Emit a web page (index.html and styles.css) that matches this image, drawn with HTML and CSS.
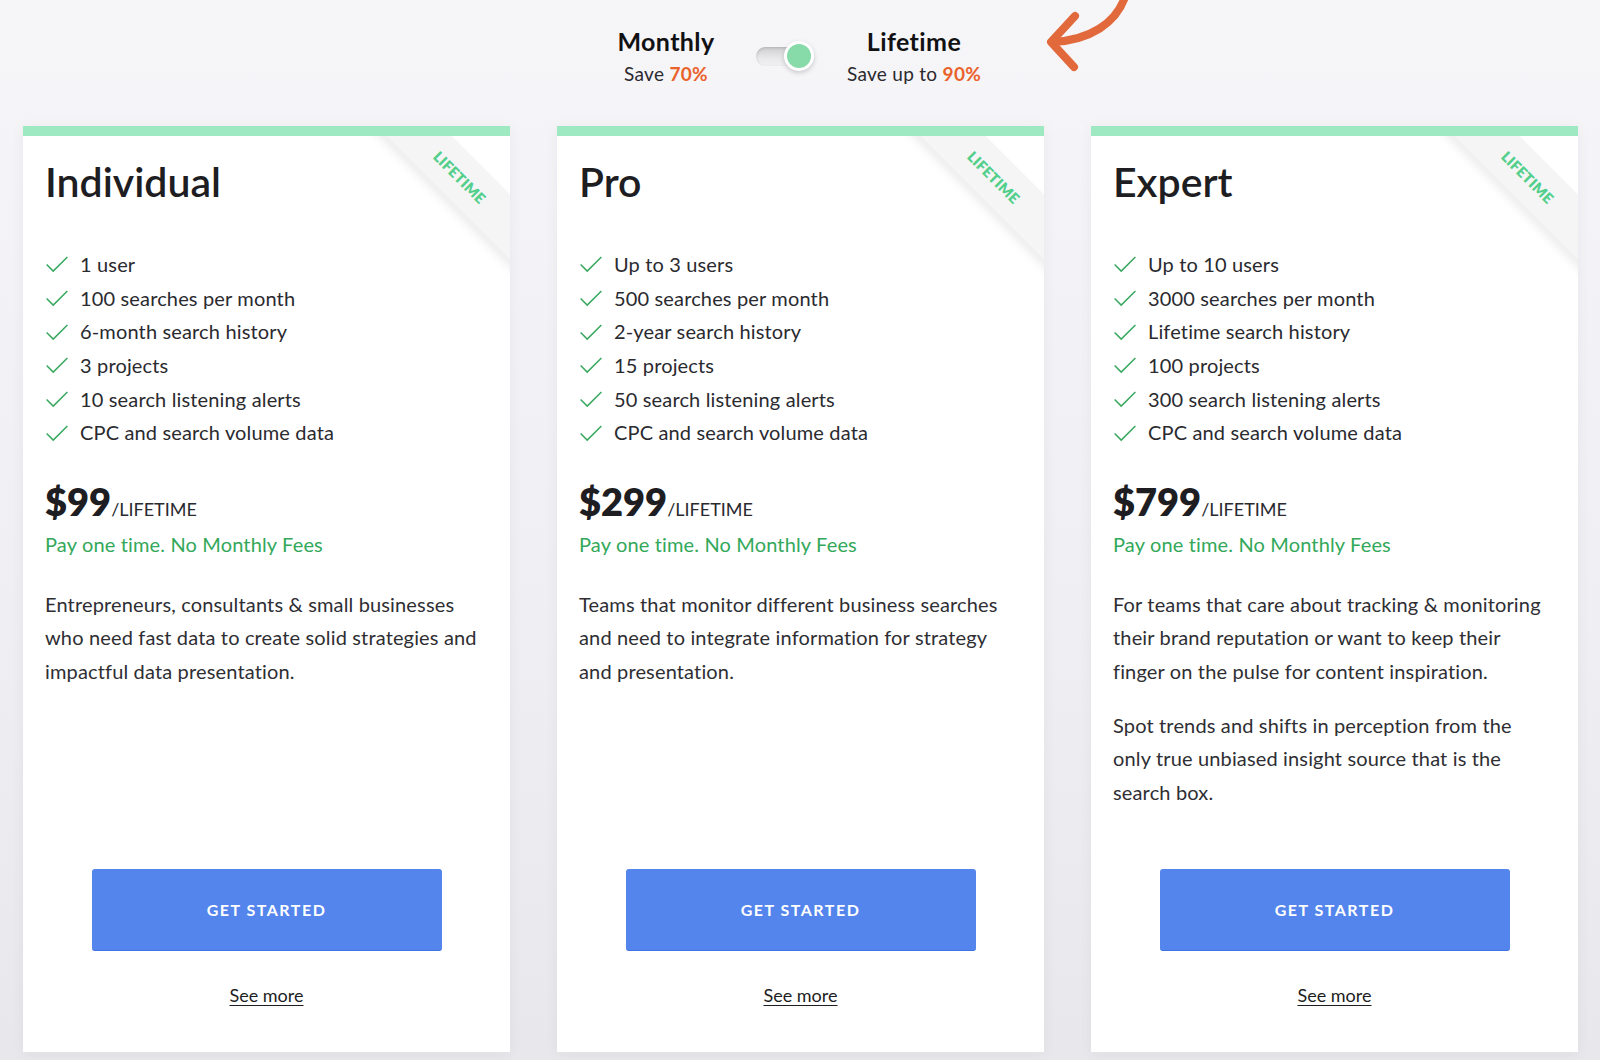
FILE: index.html
```html
<!DOCTYPE html>
<html lang="en">
<head>
<meta charset="utf-8">
<title>Pricing</title>
<link rel="stylesheet" href="styles.css">
</head>
<body>
<header class="switcher">
  <div class="switch-group">
    <div class="option option-monthly">
      <div class="option-title">Monthly</div>
      <div class="option-sub">Save <span class="hot">70%</span></div>
    </div>
    <div class="toggle"><span class="toggle-track"></span><span class="toggle-knob"></span></div>
    <div class="option option-lifetime">
      <div class="option-title">Lifetime</div>
      <div class="option-sub">Save up to <span class="hot">90%</span></div>
    </div>
  </div>
  <svg class="arrow" width="110" height="80" viewBox="0 0 110 80" aria-hidden="true">
    <path d="M93,-6 C84,24 56,40 20,42" fill="none" stroke="#e1693c" stroke-width="8" stroke-linecap="round"/>
    <path d="M42,16 L18,42 L41,67" fill="none" stroke="#e1693c" stroke-width="8" stroke-linecap="round" stroke-linejoin="round"/>
  </svg>
</header>

<main class="plans">
  <section class="card">
    <div class="ribbon"><span>LIFETIME</span></div>
    <h2 class="plan-name">Individual</h2>
    <ul class="features">
      <li><svg class="check" viewBox="0 0 24 18"><polyline points="1,9 8,16 23,1"/></svg>1 user</li>
      <li><svg class="check" viewBox="0 0 24 18"><polyline points="1,9 8,16 23,1"/></svg>100 searches per month</li>
      <li><svg class="check" viewBox="0 0 24 18"><polyline points="1,9 8,16 23,1"/></svg>6-month search history</li>
      <li><svg class="check" viewBox="0 0 24 18"><polyline points="1,9 8,16 23,1"/></svg>3 projects</li>
      <li><svg class="check" viewBox="0 0 24 18"><polyline points="1,9 8,16 23,1"/></svg>10 search listening alerts</li>
      <li><svg class="check" viewBox="0 0 24 18"><polyline points="1,9 8,16 23,1"/></svg>CPC and search volume data</li>
    </ul>
    <div class="price"><span class="amount">$99</span><span class="period">/LIFETIME</span></div>
    <div class="once">Pay one time. No Monthly Fees</div>
    <div class="desc">
      <p>Entrepreneurs, consultants &amp; small businesses who need fast data to create solid strategies and impactful data presentation.</p>
    </div>
    <div class="card-foot">
      <a class="btn" href="#">GET STARTED</a>
      <a class="more" href="#">See more</a>
    </div>
  </section>

  <section class="card">
    <div class="ribbon"><span>LIFETIME</span></div>
    <h2 class="plan-name">Pro</h2>
    <ul class="features">
      <li><svg class="check" viewBox="0 0 24 18"><polyline points="1,9 8,16 23,1"/></svg>Up to 3 users</li>
      <li><svg class="check" viewBox="0 0 24 18"><polyline points="1,9 8,16 23,1"/></svg>500 searches per month</li>
      <li><svg class="check" viewBox="0 0 24 18"><polyline points="1,9 8,16 23,1"/></svg>2-year search history</li>
      <li><svg class="check" viewBox="0 0 24 18"><polyline points="1,9 8,16 23,1"/></svg>15 projects</li>
      <li><svg class="check" viewBox="0 0 24 18"><polyline points="1,9 8,16 23,1"/></svg>50 search listening alerts</li>
      <li><svg class="check" viewBox="0 0 24 18"><polyline points="1,9 8,16 23,1"/></svg>CPC and search volume data</li>
    </ul>
    <div class="price"><span class="amount">$299</span><span class="period">/LIFETIME</span></div>
    <div class="once">Pay one time. No Monthly Fees</div>
    <div class="desc">
      <p>Teams that monitor different business searches and need to integrate information for strategy and presentation.</p>
    </div>
    <div class="card-foot">
      <a class="btn" href="#">GET STARTED</a>
      <a class="more" href="#">See more</a>
    </div>
  </section>

  <section class="card">
    <div class="ribbon"><span>LIFETIME</span></div>
    <h2 class="plan-name">Expert</h2>
    <ul class="features">
      <li><svg class="check" viewBox="0 0 24 18"><polyline points="1,9 8,16 23,1"/></svg>Up to 10 users</li>
      <li><svg class="check" viewBox="0 0 24 18"><polyline points="1,9 8,16 23,1"/></svg>3000 searches per month</li>
      <li><svg class="check" viewBox="0 0 24 18"><polyline points="1,9 8,16 23,1"/></svg>Lifetime search history</li>
      <li><svg class="check" viewBox="0 0 24 18"><polyline points="1,9 8,16 23,1"/></svg>100 projects</li>
      <li><svg class="check" viewBox="0 0 24 18"><polyline points="1,9 8,16 23,1"/></svg>300 search listening alerts</li>
      <li><svg class="check" viewBox="0 0 24 18"><polyline points="1,9 8,16 23,1"/></svg>CPC and search volume data</li>
    </ul>
    <div class="price"><span class="amount">$799</span><span class="period">/LIFETIME</span></div>
    <div class="once">Pay one time. No Monthly Fees</div>
    <div class="desc">
      <p>For teams that care about tracking &amp; monitoring their brand reputation or want to keep their finger on the pulse for content inspiration.</p>
      <p>Spot trends and shifts in perception from the only true unbiased insight source that is the search box.</p>
    </div>
    <div class="card-foot">
      <a class="btn" href="#">GET STARTED</a>
      <a class="more" href="#">See more</a>
    </div>
  </section>
</main>
</body>
</html>
```

FILE: styles.css
```css
* { box-sizing: border-box; }

html, body {
  margin: 0;
  padding: 0;
}

body {
  width: 1600px;
  height: 1060px;
  overflow: hidden;
  font-family: "Lato", "Liberation Sans", sans-serif;
  color: #2a2a2f;
  background: linear-gradient(180deg, #f6f5f8 0%, #efeef2 60%, #e8e7eb 100%);
}

/* ---------- switcher ---------- */
.switcher {
  position: relative;
  height: 126px;
  padding-top: 26px;
}

.switch-group {
  display: flex;
  justify-content: center;
  align-items: flex-start;
}

.option {
  text-align: center;
}

.option-monthly { width: 120px; }
.option-lifetime { width: 160px; margin-left: 20px; }

.option-title {
  font-size: 25px;
  line-height: 30px;
  font-weight: 700;
  letter-spacing: 0.4px;
  color: #111114;
}

.option-sub {
  margin-top: 6px;
  font-size: 19px;
  line-height: 24px;
  letter-spacing: 0.3px;
  color: #2a2a2f;
}

.hot {
  color: #ea622b;
  font-weight: 700;
}

.toggle {
  position: relative;
  width: 58px;
  height: 30px;
  margin-left: 30px;
  margin-top: 15px;
}

.toggle-track {
  position: absolute;
  left: 0;
  top: 6px;
  width: 46px;
  height: 19px;
  border-radius: 10px;
  background: linear-gradient(180deg, #cfcfd2 0%, #e9e9eb 60%, #f1f1f3 100%);
  box-shadow: inset 0 1px 3px rgba(0, 0, 0, 0.15);
}

.toggle-knob {
  position: absolute;
  left: 28px;
  top: 0;
  width: 30px;
  height: 30px;
  border-radius: 50%;
  background: #87dba8;
  border: 3px solid #ffffff;
  box-shadow: 0 2px 5px rgba(0, 0, 0, 0.18);
}

.arrow {
  position: absolute;
  left: 1033px;
  top: 0;
}

/* ---------- plans ---------- */
.plans {
  display: flex;
  gap: 47px;
  padding-left: 23px;
}

.card {
  position: relative;
  overflow: hidden;
  width: 487px;
  height: 926px;
  background: #ffffff;
  border-top: 10px solid #9ee8c2;
  padding: 22px 30px 45px 22px;
  display: flex;
  flex-direction: column;
  box-shadow: 0 2px 14px rgba(40, 40, 60, 0.05);
}

.ribbon {
  position: absolute;
  left: 287px;
  top: 18px;
  width: 300px;
  height: 46px;
  transform: rotate(45deg);
  background: #f5f5f6;
  box-shadow: 0 6px 10px rgba(0, 0, 0, 0.07);
  display: flex;
  align-items: center;
  justify-content: center;
}

.ribbon span {
  font-size: 14.5px;
  font-weight: 800;
  letter-spacing: 0.3px;
  color: #52cf8a;
}

.plan-name {
  margin: 0;
  font-size: 41px;
  line-height: 48px;
  font-weight: 600;
  color: #1d1d22;
}

.features {
  list-style: none;
  margin: 42px 0 0 0;
  padding: 0;
}

.features li {
  display: flex;
  align-items: center;
  font-size: 20px;
  line-height: 33.67px;
  letter-spacing: 0.15px;
  color: #2a2a2f;
}

.check {
  width: 24px;
  height: 17px;
  margin-right: 11px;
  flex: none;
}

.check polyline {
  fill: none;
  stroke: #3aa860;
  stroke-width: 1.6;
}

.price {
  display: flex;
  align-items: baseline;
  height: 46px;
  margin-top: 28px;
  color: #1d1d22;
}

.amount {
  font-size: 38px;
  line-height: 46px;
  font-weight: 800;
}

.period {
  font-size: 18px;
  line-height: 22px;
  color: #2a2a2f;
}

.once {
  margin-top: 4px;
  font-size: 20px;
  line-height: 33.67px;
  letter-spacing: 0.15px;
  color: #33a85a;
}

.desc {
  margin-top: 26px;
}

.desc p {
  margin: 0 0 20px 0;
  font-size: 20px;
  line-height: 33.67px;
  letter-spacing: 0.15px;
  color: #2e2e33;
}

.card-foot {
  margin-top: auto;
  margin-right: -8px;
  display: flex;
  flex-direction: column;
  align-items: center;
}

.btn {
  display: flex;
  align-items: center;
  justify-content: center;
  width: 350px;
  height: 82px;
  background: #5385ec;
  border-bottom: 1px solid #3f73e0;
  border-radius: 3px;
  color: #ffffff;
  text-decoration: none;
  font-size: 16px;
  font-weight: 700;
  letter-spacing: 1.5px;
}

.more {
  margin-top: 32px;
  font-size: 18px;
  line-height: 24px;
  color: #1d1d22;
  text-decoration: underline;
  text-underline-offset: 3px;
}
```
